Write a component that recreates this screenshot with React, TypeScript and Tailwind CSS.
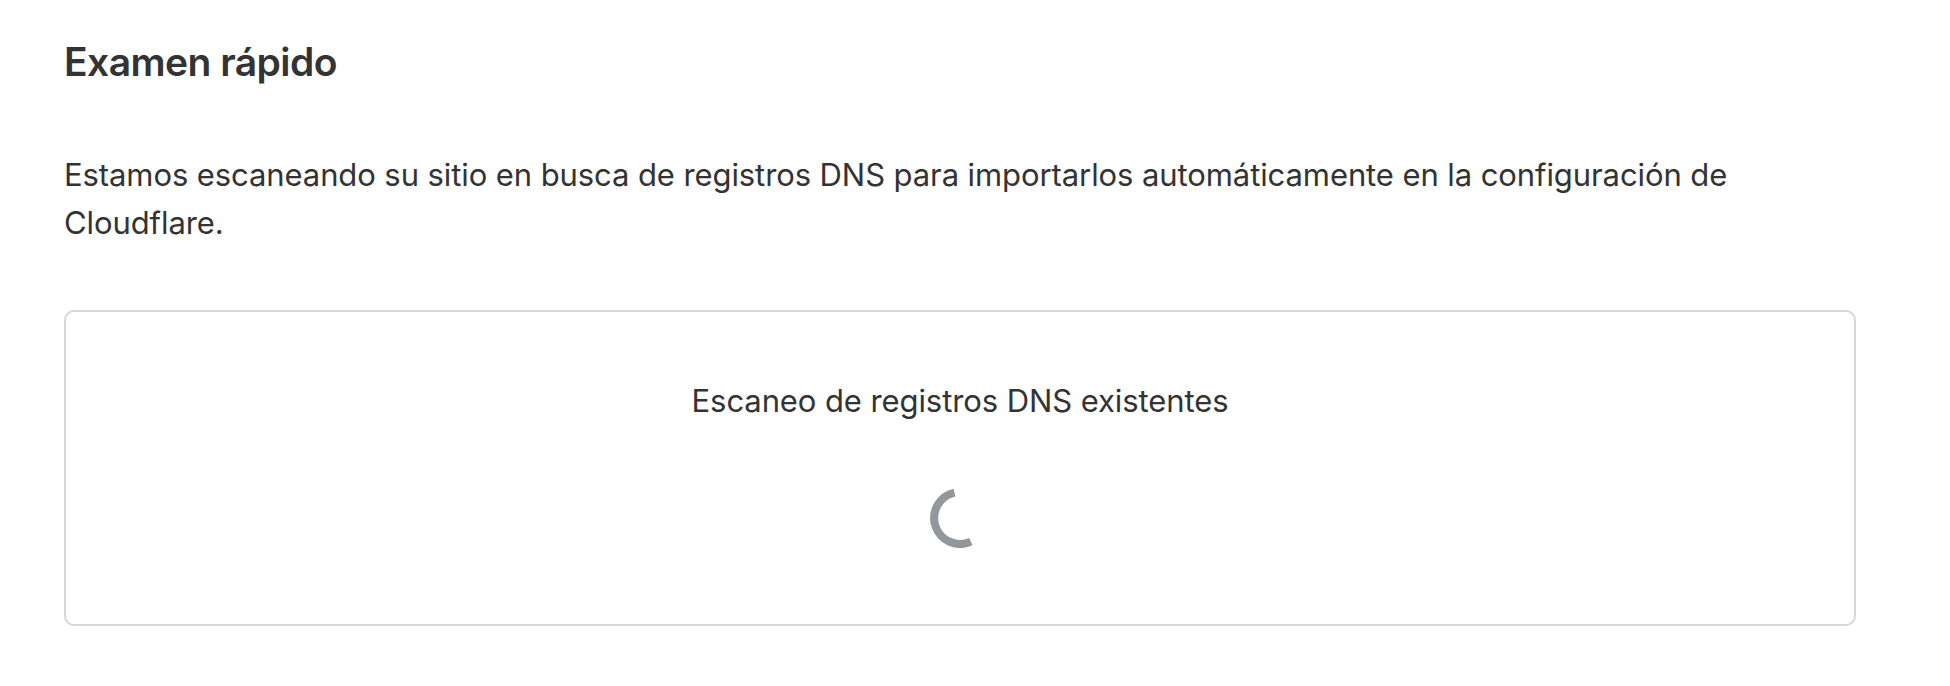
export default function App() {
  return (
    <main className="h-[686px] w-[1950px] bg-white pl-16 pr-[94px] pt-[37px] font-['Inter',sans-serif] text-[#333333]">
      <h1 className="text-[39px] leading-[50px] font-semibold tracking-[-0.55px]">Examen rápido</h1>
      <p className="mt-16 text-[31px] leading-[48px] tracking-[-0.09px]">
        Estamos escaneando su sitio en busca de registros DNS para importarlos automáticamente en la configuración de<br />Cloudflare.
      </p>
      <section className="mt-[63px] flex h-[316px] w-[1792px] flex-col items-center rounded-[10px] border-2 border-[#d6d6d6] pt-[65px]">
        <p className="text-[31px] leading-[48px] tracking-[-0.09px]">Escaneo de registros DNS existentes</p>
        <svg className="mt-[63px] size-[60px]" viewBox="0 0 60 60" fill="none">
          <path d="M24.5 4.6A26 26 0 1 0 40.8 53.7" stroke="#92979b" strokeWidth="8" />
        </svg>
      </section>
    </main>
  );
}
